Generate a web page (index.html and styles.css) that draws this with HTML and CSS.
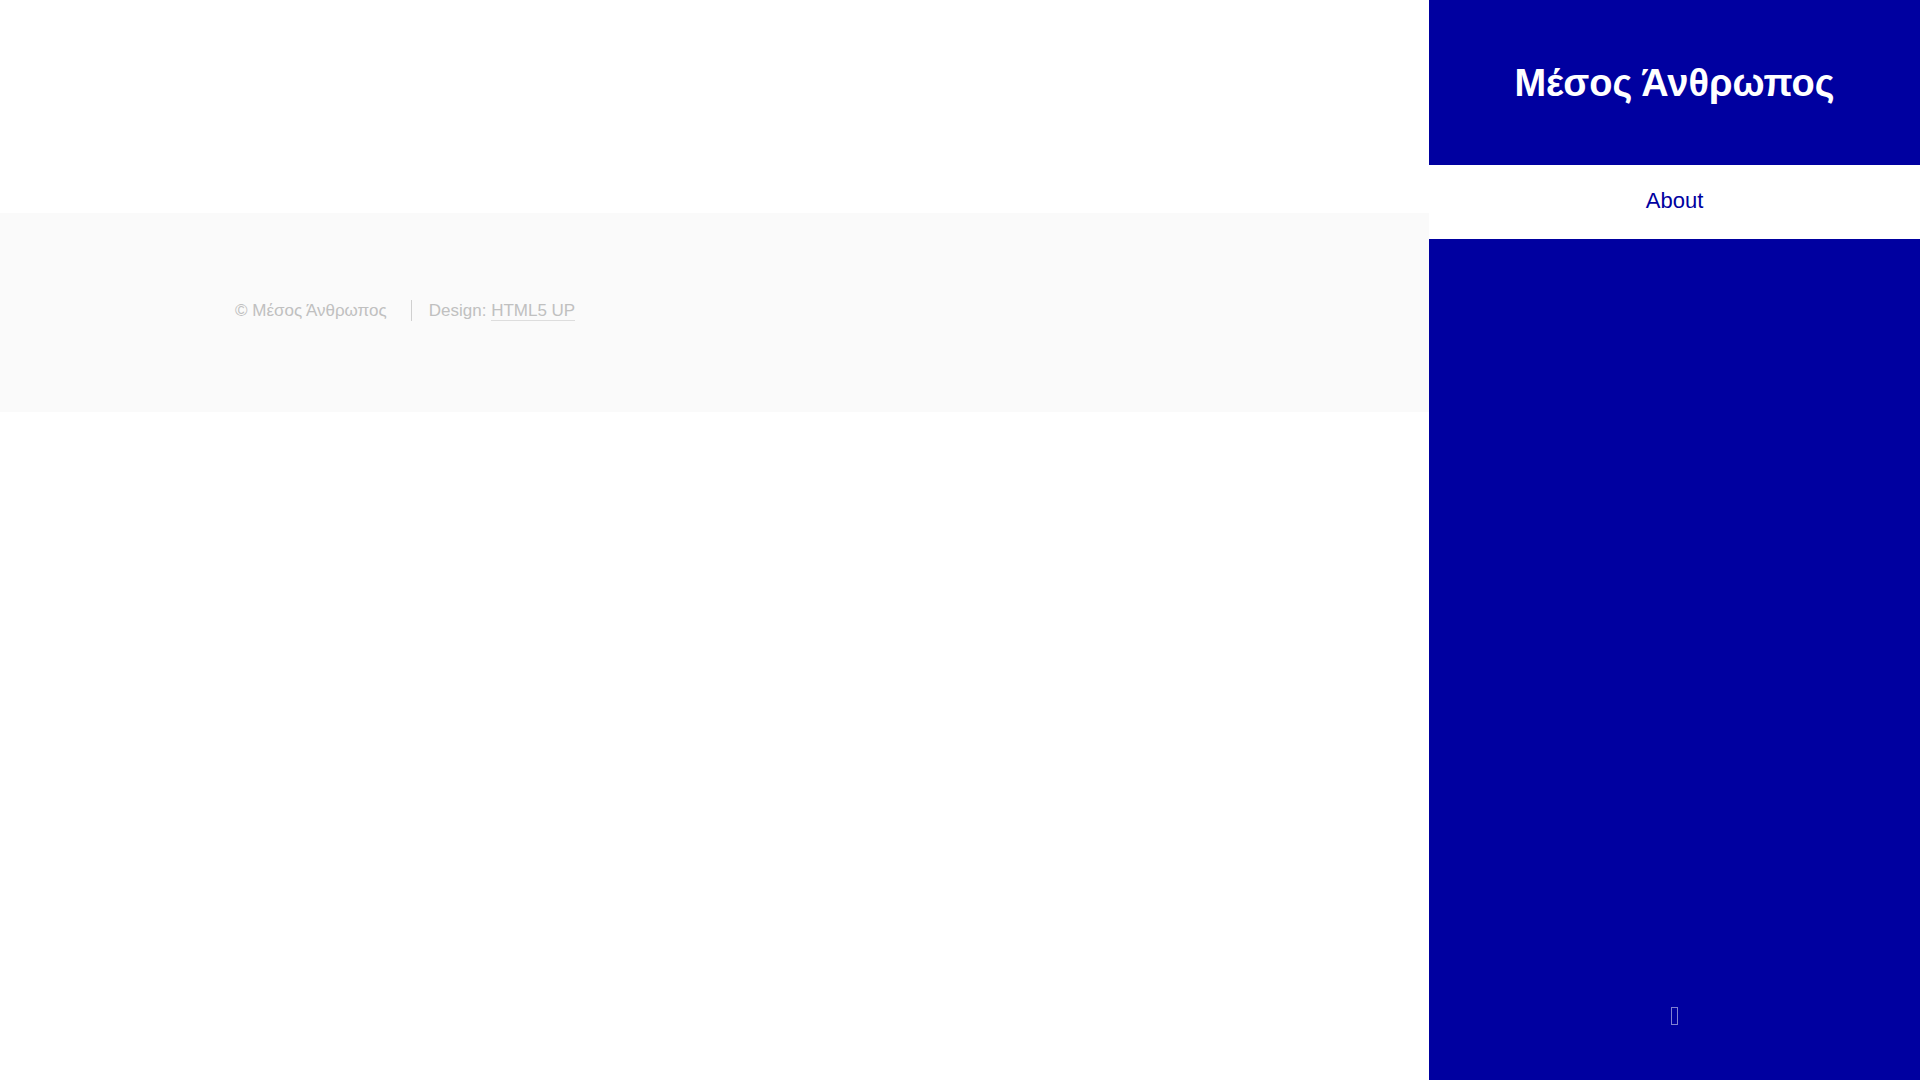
FILE: index.html
```
<!DOCTYPE html>
<html lang="el">
<head>
    <meta charset="UTF-8">
    <meta name="viewport" content="width=device-width, initial-scale=1.0">
    <title>Μέσος Άνθρωπος</title>
    <link rel="stylesheet" href="styles.css">
</head>
<body>
<div class="wrapper">
    <main class="main"></main>

    <footer class="footer">
        <ul class="copyright">
            <li>© Μέσος Άνθρωπος</li>
            <li>Design: <a href="#">HTML5 UP</a></li>
        </ul>
    </footer>
</div>

<aside class="sidebar">
    <header class="sidebar-header">
        <h1>Μέσος Άνθρωπος</h1>
    </header>

    <nav class="nav">
        <a href="#" class="active">About</a>
    </nav>

    <div class="social">
        <a href="#" aria-label="Profile">
            <svg width="7" height="18" viewBox="0 0 7 18">
                <rect x="0.5" y="0.5" width="6" height="17" fill="none" stroke="currentColor"/>
            </svg>
        </a>
    </div>
</aside>
</body>
</html>
```
FILE: styles.css
```
* {
    margin: 0;
    padding: 0;
    box-sizing: border-box;
}

body {
    display: flex;
    min-height: 100vh;
    background-color: #ffffff;
    font-family: 'Liberation Sans', Arial, sans-serif;
    font-size: 22px;
}

.wrapper {
    flex: 1;
}

.main {
    padding-top: 213px;
}

.footer {
    padding: 87px 235px 91px;
    background-color: #fafafa;
    color: #c0c0c0;
}

.copyright {
    display: flex;
    list-style: none;
    font-size: 17px;
    line-height: 21px;
}

.copyright li + li {
    margin-left: 24px;
    padding-left: 17px;
    border-left: 1px solid #d0d0d0;
}

.copyright a {
    color: inherit;
    text-decoration: none;
    border-bottom: 1px solid #dddddd;
}

.sidebar {
    display: flex;
    flex-direction: column;
    width: 491px;
    min-height: 100vh;
    background-color: #0000a0;
    color: #ffffff;
    text-align: center;
}

.sidebar-header {
    padding: 55px 32px 54px;
}

h1 {
    font-size: 38px;
    line-height: 56px;
}

.nav a {
    display: block;
    padding: 18px 0 20px;
    color: #ffffff;
    line-height: 36px;
    text-decoration: none;
}

.nav a.active {
    background-color: #ffffff;
    color: #0000a0;
}

.social {
    display: flex;
    justify-content: center;
    margin-top: auto;
    padding-bottom: 55px;
}

.social a {
    color: #8080d0;
}

.social svg {
    display: block;
}
```
